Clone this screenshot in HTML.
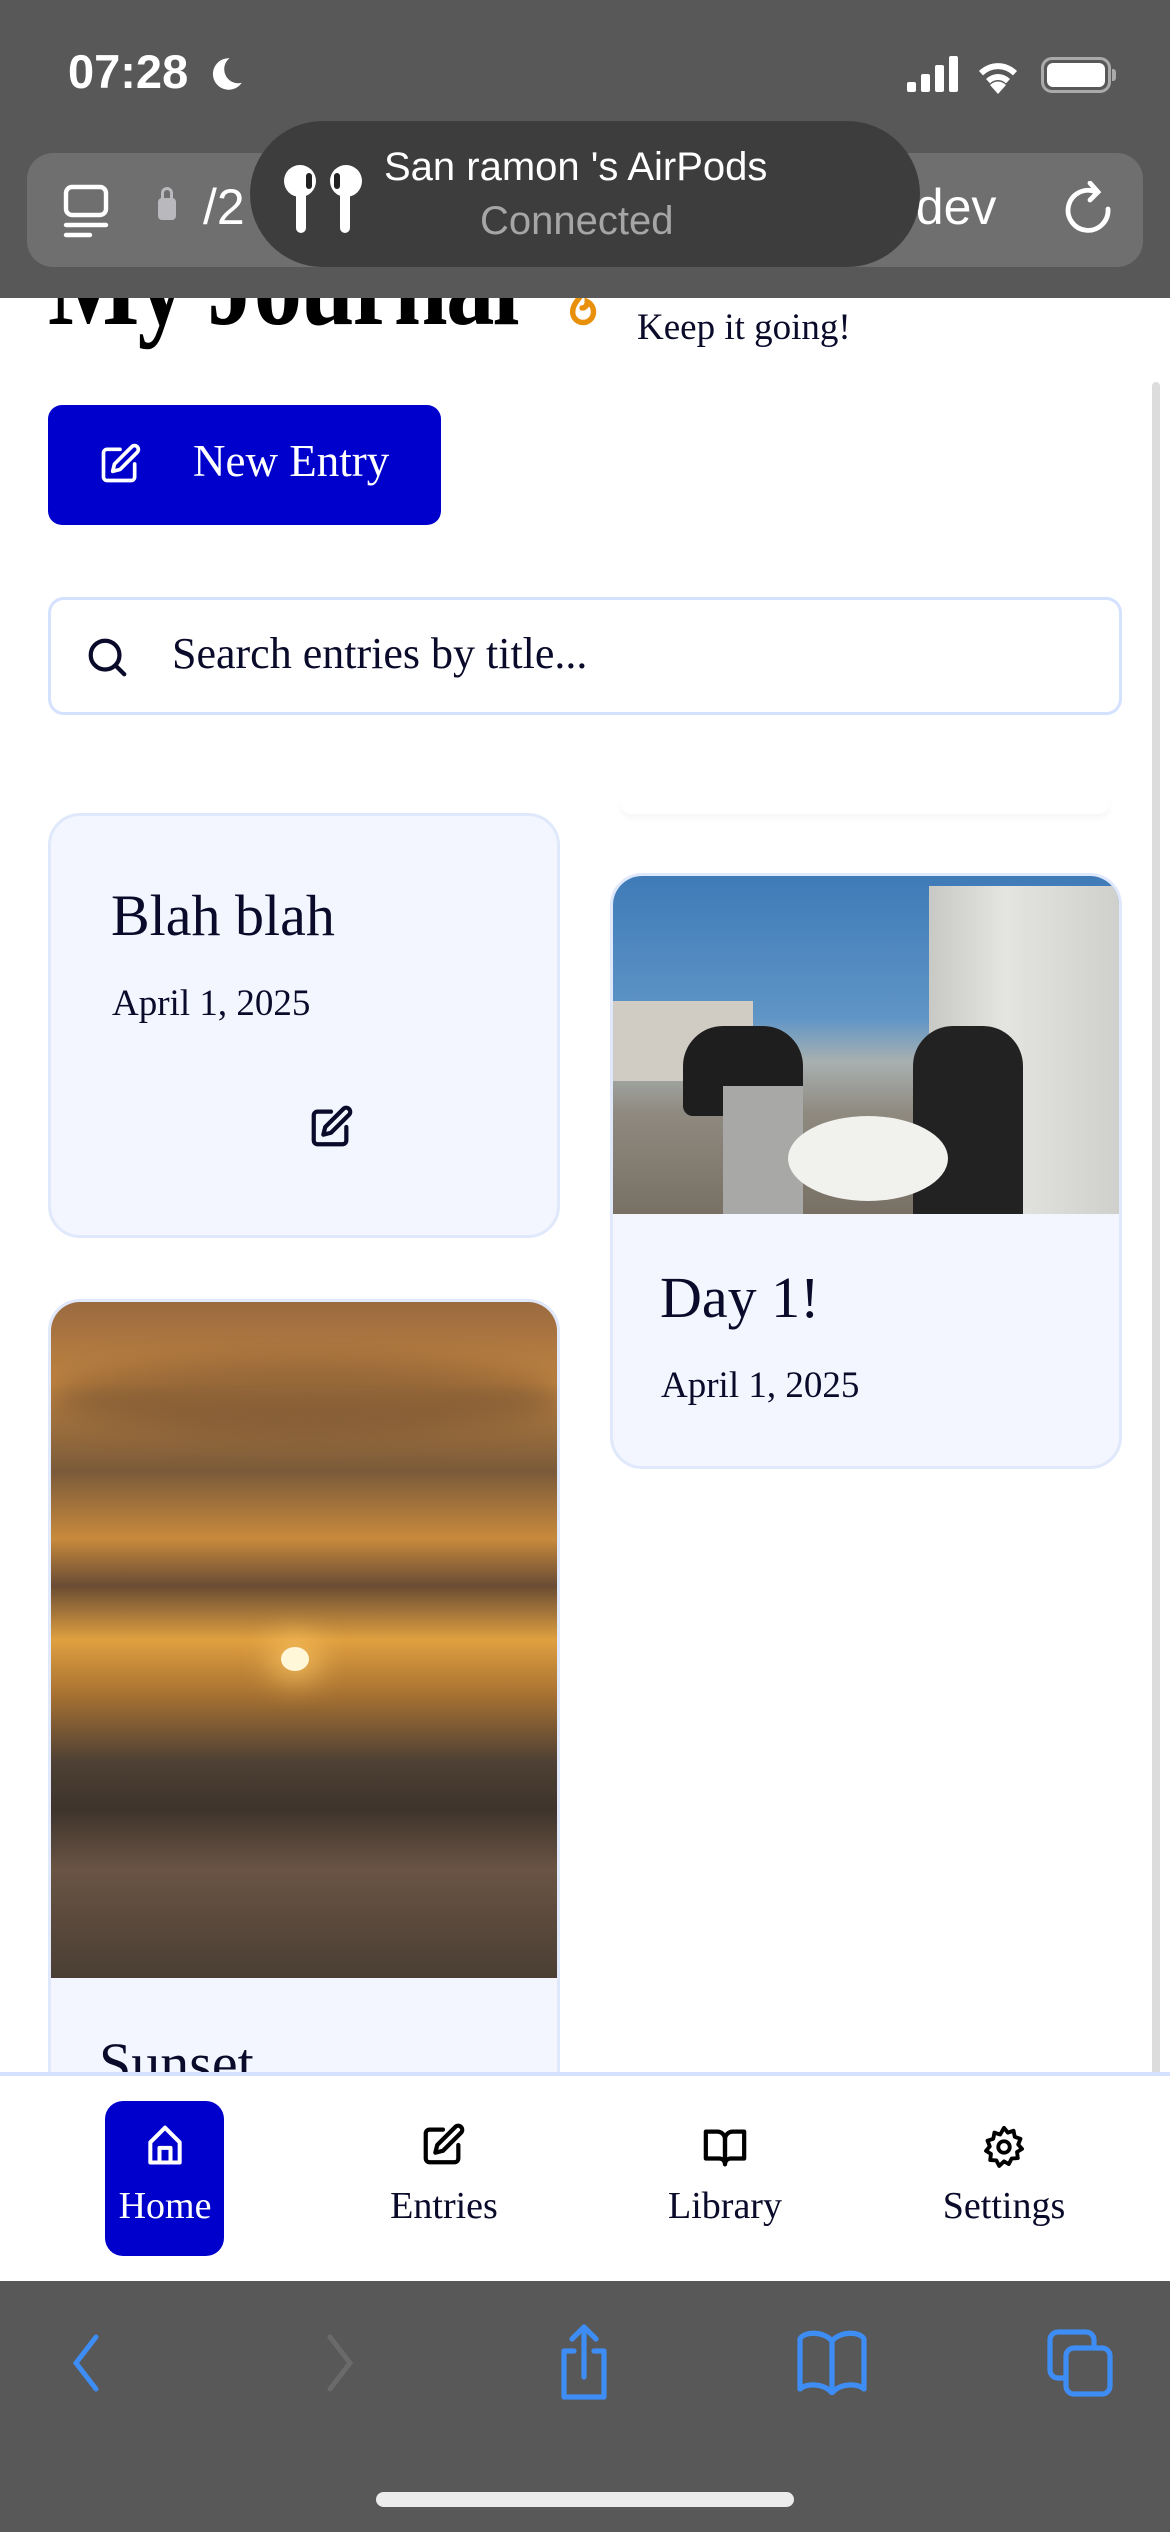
<!DOCTYPE html>
<html><head><meta charset="utf-8"><style>
*{margin:0;padding:0;box-sizing:border-box}
body{width:1170px;height:2532px;overflow:hidden;background:#fff;position:relative;font-family:"Liberation Serif",serif;color:#0a0a2a}
.abs{position:absolute}
.top{left:0;top:0;width:1170px;height:298px;background:#585858}
.url{left:27px;top:153px;width:1116px;height:114px;background:#6f6f6f;border-radius:26px}
.pill{left:250px;top:121px;width:670px;height:146px;background:#3d3d3d;border-radius:73px}
.sans{font-family:"Liberation Sans",sans-serif}
.card{background:#f3f6ff;border:3px solid #e0e8fb;border-radius:32px;overflow:hidden}
.nav{left:0;top:2072px;width:1170px;height:210px;background:#fff;border-top:4px solid #d4e2ff}
.lbl{font-size:38px;text-align:center;width:220px}
.bottom{left:0;top:2281px;width:1170px;height:251px;background:#585858}
</style></head><body>

<!-- page content -->
<div class="abs" style="left:48px;top:226px;font-size:118px;font-weight:bold;line-height:1;letter-spacing:-2px;color:#000;transform:scaleX(0.82);transform-origin:0 0;white-space:nowrap">My Journal</div>
<svg class="abs" style="left:556px;top:285px" width="50" height="50" viewBox="0 0 24 24"><path d="M12 3c1 3-4 5-4 10a5 5 0 0010 0c0-2-1-4-3-5 0 2-1 3-2.5 3" fill="none" stroke="#e8900a" stroke-width="2.6" stroke-linecap="round"/></svg>
<div class="abs" style="left:637px;top:306px;font-size:37px">Keep it going!</div>

<div class="abs" style="left:48px;top:405px;width:393px;height:120px;background:#0000cc;border-radius:14px"></div>
<svg class="abs" style="left:98px;top:442px" width="44" height="44" viewBox="0 0 24 24" fill="none" stroke="#fff" stroke-width="2" stroke-linecap="round" stroke-linejoin="round"><path d="M12 4H5a2 2 0 00-2 2v13a2 2 0 002 2h13a2 2 0 002-2v-7"/><path d="M18.4 2.6a2.1 2.1 0 013 3L12 15l-4 1 1-4z"/></svg>
<div class="abs" style="left:193px;top:435px;font-size:45px;color:#fff">New Entry</div>

<div class="abs" style="left:48px;top:597px;width:1074px;height:118px;border:3px solid #d4e2ff;border-radius:16px"></div>
<svg class="abs" style="left:84px;top:634px" width="46" height="46" viewBox="0 0 24 24" fill="none" stroke="#0a0a2a" stroke-width="2.2" stroke-linecap="round"><circle cx="11" cy="11" r="7.5"/><path d="M16.5 16.5L21 21"/></svg>
<div class="abs" style="left:172px;top:628px;font-size:44px">Search entries by title...</div>

<div class="abs" style="left:620px;top:790px;width:490px;height:24px;border-radius:20px;box-shadow:0 5px 6px rgba(0,0,0,0.03)"></div>

<!-- card 1 -->
<div class="abs card" style="left:48px;top:813px;width:512px;height:425px"></div>
<div class="abs" style="left:111px;top:882px;font-size:58px">Blah blah</div>
<div class="abs" style="left:112px;top:982px;font-size:37px">April 1, 2025</div>
<svg class="abs" style="left:308px;top:1104px" width="46" height="46" viewBox="0 0 24 24" fill="none" stroke="#0a0a2a" stroke-width="2.2" stroke-linecap="round" stroke-linejoin="round"><path d="M12 4H5a2 2 0 00-2 2v13a2 2 0 002 2h13a2 2 0 002-2v-7"/><path d="M18.4 2.6a2.1 2.1 0 013 3L12 15l-4 1 1-4z"/></svg>

<!-- card 2 -->
<div class="abs card" style="left:610px;top:873px;width:512px;height:596px">
 <div style="position:relative;height:338px;background:linear-gradient(180deg,#3f7bb8 0%,#5f95c6 42%,#a8b0b0 55%,#8f8a80 70%,#787064 100%)">
  <div style="position:absolute;right:0;top:10px;width:190px;height:328px;background:linear-gradient(90deg,#c8c8c4,#e4e4e0 40%,#cfd0cc);"></div>
  <div style="position:absolute;left:0;top:125px;width:140px;height:80px;background:#d0ccc4"></div>
  <div style="position:absolute;left:70px;top:150px;width:120px;height:90px;background:#1e1e1e;border-radius:40px 40px 10px 10px"></div>
  <div style="position:absolute;left:110px;top:210px;width:80px;height:128px;background:#a8a8a6"></div>
  <div style="position:absolute;left:300px;top:150px;width:110px;height:188px;background:#222;border-radius:40px 40px 0 0"></div>
  <div style="position:absolute;left:175px;top:240px;width:160px;height:85px;background:#f1f1ee;border-radius:50%"></div>
 </div>
 <div style="position:absolute;left:47px;top:388px;font-size:58px">Day 1!</div>
 <div style="position:absolute;left:48px;top:488px;font-size:37px">April 1, 2025</div>
</div>

<!-- card 3 -->
<div class="abs card" style="left:48px;top:1299px;width:512px;height:900px">
 <div style="position:relative;height:676px;background:linear-gradient(180deg,#9a6a40 0%,#c08440 12%,#7a5a3a 25%,#c88a3c 35%,#6a4c34 42%,#e0a040 50%,#a87232 58%,#4e4034 68%,#3e342c 75%,#6a5444 84%,#4a3e34 100%)">
  <div style="position:absolute;left:0;top:60px;width:512px;height:70px;background:rgba(70,50,40,0.35);filter:blur(14px);border-radius:50%"></div>
  <div style="position:absolute;left:230px;top:345px;width:28px;height:24px;background:#fff7d8;border-radius:50%;box-shadow:0 0 30px 12px rgba(255,200,100,0.7)"></div>
 </div>
 <div style="position:absolute;left:48px;top:728px;font-size:58px">Sunset</div>
</div>

<div class="abs" style="left:1152px;top:382px;width:8px;height:1724px;background:#dcdcdc;border-radius:4px"></div>

<!-- bottom nav -->
<div class="abs nav"></div>
<div class="abs" style="left:105px;top:2101px;width:119px;height:155px;background:#0000cc;border-radius:18px"></div>
<svg class="abs" style="left:143px;top:2121px" width="44" height="50" viewBox="0 0 24 24" fill="none" stroke="#fff" stroke-width="2.2" stroke-linejoin="round"><path d="M4 21V10l8-8 8 8v11z"/><path d="M9 21v-8h6v8"/></svg>
<div class="abs lbl" style="left:55px;top:2184px;color:#fff">Home</div>
<svg class="abs" style="left:420px;top:2122px" width="46" height="46" viewBox="0 0 24 24" fill="none" stroke="#000" stroke-width="2.2" stroke-linecap="round" stroke-linejoin="round"><path d="M12 4H5a2 2 0 00-2 2v13a2 2 0 002 2h13a2 2 0 002-2v-7"/><path d="M18.4 2.6a2.1 2.1 0 013 3L12 15l-4 1 1-4z"/></svg>
<div class="abs lbl" style="left:334px;top:2184px">Entries</div>
<svg class="abs" style="left:702px;top:2124px" width="46" height="46" viewBox="0 0 24 24" fill="none" stroke="#000" stroke-width="2.2" stroke-linejoin="round"><path d="M2 4h6a4 4 0 014 4v13a3 3 0 00-3-3H2z"/><path d="M22 4h-6a4 4 0 00-4 4v13a3 3 0 013-3h7z"/></svg>
<div class="abs lbl" style="left:615px;top:2184px">Library</div>
<svg class="abs" style="left:981px;top:2124px" width="46" height="46" viewBox="0 0 24 24" fill="none" stroke="#000" stroke-width="2" stroke-linejoin="round"><circle cx="12" cy="12" r="3"/><path d="M12 2l2 2.5 3-1 .6 3.2 3 1-1.2 3 2 2.3-2.6 1.6.4 3.2-3.2.2-1.5 2.9L12 19.5 9.5 21.9 8 19l-3.2-.2.4-3.2L2.6 14l2-2.3-1.2-3 3-1L7 4.5l3 1z"/></svg>
<div class="abs lbl" style="left:894px;top:2184px">Settings</div>

<!-- safari bottom -->
<div class="abs bottom"></div>
<svg class="abs" style="left:66px;top:2333px" width="40" height="60" viewBox="0 0 20 30" fill="none" stroke="#3d8df5" stroke-width="2.5" stroke-linecap="round"><path d="M15 2L5 15l10 13"/></svg>
<svg class="abs" style="left:320px;top:2333px" width="40" height="60" viewBox="0 0 20 30" fill="none" stroke="#6a6a6a" stroke-width="2.5" stroke-linecap="round"><path d="M5 2l10 13L5 28"/></svg>
<svg class="abs" style="left:554px;top:2323px" width="60" height="80" viewBox="0 0 30 40" fill="none" stroke="#3d8df5" stroke-width="2.6" stroke-linecap="round" stroke-linejoin="round"><path d="M15 27V2M9 8l6-6 6 6"/><path d="M10 14H5v23h20V14h-5"/></svg>
<svg class="abs" style="left:796px;top:2329px" width="72" height="66" viewBox="0 0 36 33" fill="none" stroke="#3d8df5" stroke-width="2.6" stroke-linejoin="round"><path d="M18 6C14 1 4 1 2 5v25c3-3 12-3 16 2 4-5 13-5 16-2V5c-2-4-12-4-16 1z"/><path d="M18 6v26"/></svg>
<svg class="abs" style="left:1046px;top:2328px" width="68" height="70" viewBox="0 0 34 35" fill="none" stroke="#3d8df5" stroke-width="2.6" stroke-linejoin="round"><rect x="2" y="2" width="22" height="23" rx="4"/><rect x="10" y="10" width="22" height="23" rx="4" fill="#585858"/></svg>
<div class="abs" style="left:376px;top:2492px;width:418px;height:15px;background:#ececec;border-radius:8px"></div>

<!-- top bars -->
<div class="abs top"></div>
<div class="abs sans" style="left:68px;top:44px;font-size:47px;font-weight:bold;color:#fff">07:28</div>
<svg class="abs" style="left:205px;top:52px" width="42" height="44" viewBox="0 0 24 24"><path d="M14 3a9 9 0 107 14A8 8 0 0114 3z" fill="#fff"/></svg>
<div class="abs" style="left:907px;top:82px;width:9px;height:10px;background:#fff;border-radius:2px"></div>
<div class="abs" style="left:921px;top:74px;width:9px;height:18px;background:#fff;border-radius:2px"></div>
<div class="abs" style="left:935px;top:65px;width:9px;height:27px;background:#fff;border-radius:2px"></div>
<div class="abs" style="left:949px;top:56px;width:9px;height:36px;background:#fff;border-radius:2px"></div>
<svg class="abs" style="left:974px;top:54px" width="48" height="40" viewBox="0 0 24 20" fill="#fff"><path d="M12 20l-4-4.5a5.5 5.5 0 018 0z"/><path d="M2.5 8.5a13.5 13.5 0 0119 0l-2 2.2a10.5 10.5 0 00-15 0z"/><path d="M6 12.5a8.5 8.5 0 0112 0l-2 2.2a5.5 5.5 0 00-8 0z"/></svg>
<div class="abs" style="left:1041px;top:57px;width:70px;height:36px;border:3px solid #aaa;border-radius:11px;padding:3px"><div style="width:100%;height:100%;background:#fff;border-radius:6px"></div></div>
<div class="abs" style="left:1112px;top:69px;width:4px;height:12px;background:#aaa;border-radius:0 3px 3px 0"></div>
<div class="abs url"></div>
<svg class="abs" style="left:62px;top:183px" width="48" height="56" viewBox="0 0 24 28" fill="none" stroke="#fff" stroke-width="2.2" stroke-linecap="round"><rect x="2" y="2" width="20" height="14" rx="3"/><path d="M2 21h20M2 26h12"/></svg>
<div class="abs" style="left:158px;top:198px;width:18px;height:22px;background:#b8b8bd;border-radius:4px"></div>
<div class="abs" style="left:161px;top:187px;width:12px;height:16px;border:3px solid #b8b8bd;border-radius:7px 7px 0 0"></div>
<div class="abs sans" style="left:203px;top:178px;font-size:50px;color:#fff">/2</div>
<div class="abs sans" style="left:888px;top:178px;font-size:50px;color:#fff">t.dev</div>
<svg class="abs" style="left:1064px;top:181px" width="52" height="56" viewBox="0 0 26 28" fill="none" stroke="#fff" stroke-width="2.4" stroke-linecap="round"><path d="M16 5.5A10 10 0 1022 14"/><path d="M13 1l4 4.5-4 4"/></svg>
<div class="abs pill"></div>
<svg class="abs" style="left:280px;top:165px" width="86" height="68" viewBox="0 0 43 34"><g fill="#fff"><circle cx="10" cy="8" r="8"/><rect x="8" y="8" width="5" height="26" rx="2.5"/><circle cx="33" cy="8" r="8"/><rect x="30" y="8" width="5" height="26" rx="2.5"/></g><rect x="13" y="4" width="3" height="8" rx="1.5" fill="#222"/><rect x="27" y="4" width="3" height="8" rx="1.5" fill="#222"/></svg>
<div class="abs sans" style="left:384px;top:145px;font-size:40px;color:#fff">San ramon 's AirPods</div>
<div class="abs sans" style="left:480px;top:199px;font-size:40px;color:#a6a6a6">Connected</div>
</body></html>
